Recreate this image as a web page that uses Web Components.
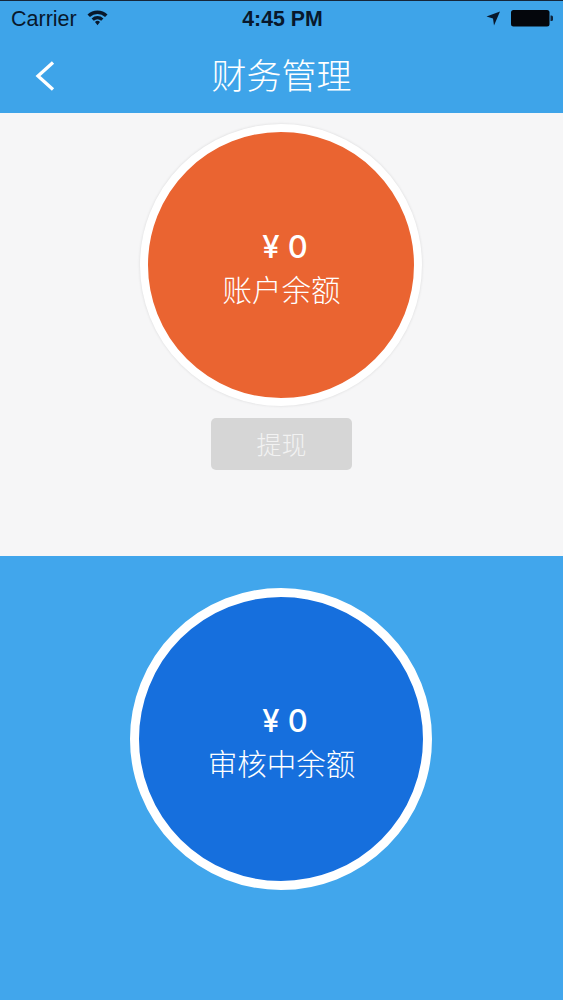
<!DOCTYPE html>
<html lang="zh">
<head>
<meta charset="utf-8">
<title>财务管理</title>
<style>
  html, body { margin: 0; padding: 0; }
  body { width: 563px; height: 1000px; overflow: hidden; font-family: "Liberation Sans", "Noto Sans CJK SC", sans-serif; }
</style>
</head>
<body>
<fin-page>
  <fin-nav slot="nav">财务管理</fin-nav>
  <fin-balance slot="top" size="282" border="8" color="#ea6431" shadow amount="¥ 0" label="账户余额"></fin-balance>
  <fin-button slot="top">提现</fin-button>
  <fin-balance slot="bottom" size="302" border="9" color="#166fdd" amount="¥ 0" label="审核中余额"></fin-balance>
</fin-page>

<script>
// Page frame: nav, grey section, blue section
const pageTemplate = document.createElement('template');
pageTemplate.innerHTML = `
  <style>
    :host {
      display: flex;
      flex-direction: column;
      width: 563px;
      height: 1000px;
      background: #41a6ec;
    }
    .top {
      height: 443px;
      box-sizing: border-box;
      padding-top: 11px;
      display: flex;
      flex-direction: column;
      align-items: center;
      gap: 12px;
      background: #f6f6f7;
    }
    .bottom {
      flex: 1;
      box-sizing: border-box;
      padding-top: 32px;
      display: flex;
      flex-direction: column;
      align-items: center;
    }
  </style>
  <slot name="nav"></slot>
  <div class="top"><slot name="top"></slot></div>
  <div class="bottom"><slot name="bottom"></slot></div>
`;

class FinPage extends HTMLElement {
  constructor() {
    super();
    this.attachShadow({ mode: 'open' });
    this.shadowRoot.appendChild(pageTemplate.content.cloneNode(true));
  }
}

// Status bar and title bar
const navTemplate = document.createElement('template');
navTemplate.innerHTML = `
  <style>
    :host {
      display: block;
      height: 113px;
      box-sizing: border-box;
      border-top: 1px solid #16263a;
      background: #3ea4e9;
    }
    .status {
      height: 36px;
      display: grid;
      grid-template-columns: 1fr auto 1fr;
      align-items: center;
      padding: 0 9px 0 11px;
      color: #08182c;
      font: 21.5px "Liberation Sans", Arial, sans-serif;
    }
    .left, .right { display: flex; align-items: center; }
    .left { gap: 10px; }
    .left svg { margin-top: -3px; }
    .right { justify-content: flex-end; gap: 10px; margin-top: -2px; }
    .time { font-weight: bold; font-size: 21.3px; }
    .bar {
      height: 76px;
      display: grid;
      grid-template-columns: 1fr auto 1fr;
      align-items: center;
      color: #fff;
    }
    .back { display: block; margin: 2px 0 0 33px; }
    .title {
      font: 35px "Noto Sans CJK SC", sans-serif;
      font-weight: 300;
      line-height: 1;
      margin-top: -3px;
    }
    svg { display: block; }
  </style>
  <div class="status">
    <div class="left">
      <span>Carrier</span>
      <svg width="21" height="17" viewBox="0 0 22 17">
        <path d="M.5 5.400 A15 15 0 0 1 21.500 5.400 L18.900 8 A11.500 11.500 0 0 0 3.100 8 Z" fill="#08182c"/>
        <path d="M4.800 9.500 A9 9 0 0 1 17.200 9.500 L14.900 11.900 A6 6 0 0 0 7.100 11.900 Z" fill="#08182c"/>
        <path d="M8.400 13.100 A3.800 3.800 0 0 1 13.600 13.100 L11 16.500 Z" fill="#08182c"/>
      </svg>
    </div>
    <span class="time">4:45 PM</span>
    <div class="right">
      <svg width="15" height="15" viewBox="0 0 15 15"><path d="M14 .5 L.5 5.500 L7 7.500 L8 14.500 Z" fill="#08182c"/></svg>
      <svg width="43" height="17" viewBox="0 0 43 17">
        <rect x="0" y="0" width="38.500" height="16.500" rx="2.500" fill="#04060c"/>
        <path d="M39.500 5.500 h1 a1.500 1.500 0 0 1 1.500 1.500 v2.500 a1.500 1.500 0 0 1 -1.500 1.500 h-1 Z" fill="#10243c"/>
      </svg>
    </div>
  </div>
  <div class="bar">
    <svg class="back" width="22" height="32" viewBox="0 0 22 32">
      <path d="M20 2.500 L5 16 L20 29.500" fill="none" stroke="#fff" stroke-width="3.300"/>
    </svg>
    <span class="title"><slot></slot></span>
    <span></span>
  </div>
`;

class FinNav extends HTMLElement {
  constructor() {
    super();
    this.attachShadow({ mode: 'open' });
    this.shadowRoot.appendChild(navTemplate.content.cloneNode(true));
  }
}

// Ringed circle with amount and label
const balanceTemplate = document.createElement('template');
balanceTemplate.innerHTML = `
  <style>
    :host {
      display: block;
      flex: none;
      margin-right: 1px;
    }
    .circle {
      box-sizing: border-box;
      border-radius: 50%;
      border: solid #fff;
      padding: 4px 0 0 1px;
      display: flex;
      flex-direction: column;
      align-items: center;
      justify-content: center;
      color: #fff;
      font-family: "Noto Sans CJK SC", sans-serif;
      font-weight: 300;
    }
    .amount {
      font: 500 31px/42px Inter, "Liberation Sans", sans-serif;
      padding-left: 7px;
    }
    .label {
      font-size: 29.5px;
      line-height: 41px;
    }
  </style>
  <div class="circle">
    <div class="amount"></div>
    <div class="label"></div>
  </div>
`;

class FinBalance extends HTMLElement {
  constructor() {
    super();
    this.attachShadow({ mode: 'open' });
    this.shadowRoot.appendChild(balanceTemplate.content.cloneNode(true));
  }

  connectedCallback() {
    const circle = this.shadowRoot.querySelector('.circle');
    const size = this.getAttribute('size') + 'px';
    circle.style.width = size;
    circle.style.height = size;
    circle.style.borderWidth = this.getAttribute('border') + 'px';
    circle.style.background = this.getAttribute('color');
    if (this.hasAttribute('shadow')) {
      circle.style.boxShadow = '0 0 3px rgba(0, 0, 0, 0.12)';
    }
    this.shadowRoot.querySelector('.amount').textContent = this.getAttribute('amount');
    this.shadowRoot.querySelector('.label').textContent = this.getAttribute('label');
  }
}

// Disabled looking button
const buttonTemplate = document.createElement('template');
buttonTemplate.innerHTML = `
  <style>
    :host {
      display: flex;
      align-items: center;
      justify-content: center;
      box-sizing: border-box;
      width: 141px;
      height: 52px;
      padding-bottom: 3px;
      border-radius: 5px;
      background: #d6d6d6;
      color: #f2f2f2;
      font: 300 25px "Noto Sans CJK SC", sans-serif;
    }
  </style>
  <slot></slot>
`;

class FinButton extends HTMLElement {
  constructor() {
    super();
    this.attachShadow({ mode: 'open' });
    this.shadowRoot.appendChild(buttonTemplate.content.cloneNode(true));
  }
}

customElements.define('fin-page', FinPage);
customElements.define('fin-nav', FinNav);
customElements.define('fin-balance', FinBalance);
customElements.define('fin-button', FinButton);
</script>
</body>
</html>
